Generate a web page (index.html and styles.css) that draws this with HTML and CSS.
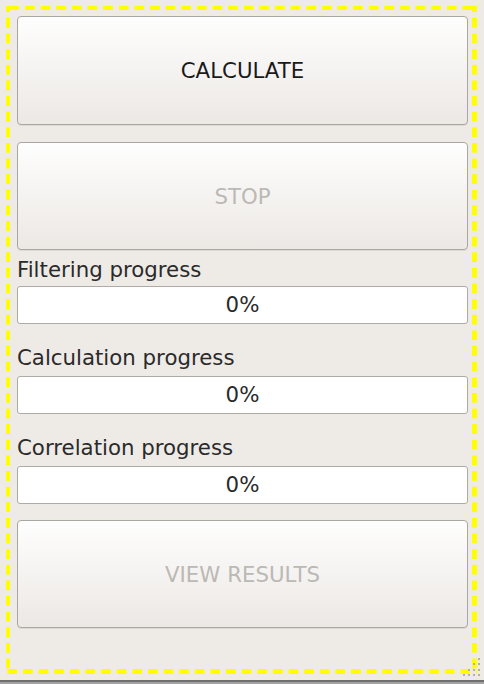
FILE: index.html
```
<!DOCTYPE html>
<html>
<head>
<meta charset="utf-8">
<link rel="stylesheet" href="styles.css">
</head>
<body>
<div class="client">
  <div class="panel">
    <button class="btn">CALCULATE</button>
    <button class="btn btn-stop" disabled>STOP</button>
    <div class="label label-first">Filtering progress</div>
    <div class="bar">0%</div>
    <div class="label">Calculation progress</div>
    <div class="bar">0%</div>
    <div class="label">Correlation progress</div>
    <div class="bar">0%</div>
    <button class="btn btn-view" disabled>VIEW RESULTS</button>
  </div>
  <svg class="grip" width="20" height="20" viewBox="0 0 20 20">
    <g fill="#b4b0ac">
      <rect x="16" y="0" width="2" height="2"/>
      <rect x="16" y="5" width="2" height="2"/>
      <rect x="11" y="5" width="2" height="2"/>
      <rect x="16" y="11" width="2" height="2"/>
      <rect x="11" y="11" width="2" height="2"/>
      <rect x="6" y="11" width="2" height="2"/>
      <rect x="16" y="16" width="2" height="2"/>
      <rect x="11" y="16" width="2" height="2"/>
      <rect x="6" y="16" width="2" height="2"/>
      <rect x="1" y="16" width="2" height="2"/>
    </g>
  </svg>
</div>
<div class="edge"></div>
</body>
</html>
```
FILE: styles.css
```
html, body {
  margin: 0;
  padding: 0;
}
body {
  width: 484px;
  height: 684px;
  overflow: hidden;
  background: #eeebe7;
  font-family: "DejaVu Sans", sans-serif;
  font-size: 21.3px;
  color: #2a2a2a;
  display: flex;
  flex-direction: column;
}
.client {
  position: relative;
  height: 680px;
  padding: 6px 7px 0 6px;
  box-sizing: border-box;
}
.edge {
  height: 4px;
  background: linear-gradient(to bottom, #6f6f6f 0 2px, #a3a3a3 2px 4px);
}
.panel {
  width: 471px;
  height: 668px;
  box-sizing: border-box;
  padding: 10px 9px 0 11px;
  display: flex;
  flex-direction: column;
  background:
    linear-gradient(to right, #ffff00 10px, transparent 10px) 3.4px 0 / 15.625px 4px repeat-x,
    linear-gradient(to right, #ffff00 10px, transparent 10px) 1.3px 100% / 15.625px 5px repeat-x,
    linear-gradient(to bottom, #ffff00 10px, transparent 10px) 0 -3.7px / 4px 15.625px repeat-y,
    linear-gradient(to bottom, #ffff00 10px, transparent 10px) 100% -3.7px / 5px 15.625px repeat-y;
}
.btn {
  display: block;
  width: 451px;
  height: 109px;
  margin: 0;
  padding: 0;
  font-family: inherit;
  font-size: inherit;
  color: #1a1a1a;
  border: 1px solid #aaa6a2;
  border-radius: 4px;
  background: linear-gradient(to bottom, #fefefe, #ece8e4);
  box-shadow: 0 1px 0 rgba(0,0,0,0.07);
}
.btn[disabled] {
  color: #bcb8b4;
}
.btn-stop {
  margin-top: 17px;
  height: 108px;
}
.btn-view {
  margin-top: 16px;
  height: 108px;
}
.label {
  height: 25px;
  line-height: 25px;
  margin-top: 21px;
  margin-bottom: 6px;
  white-space: nowrap;
}
.label-first {
  margin-top: 7px;
  margin-bottom: 4px;
}
.bar {
  height: 38px;
  box-sizing: border-box;
  border: 1px solid #aeaaa6;
  border-radius: 3px;
  background: #ffffff;
  text-align: center;
  line-height: 36px;
  color: #2a2a2a;
}
.grip {
  position: absolute;
  right: 2px;
  bottom: 2px;
}
```
